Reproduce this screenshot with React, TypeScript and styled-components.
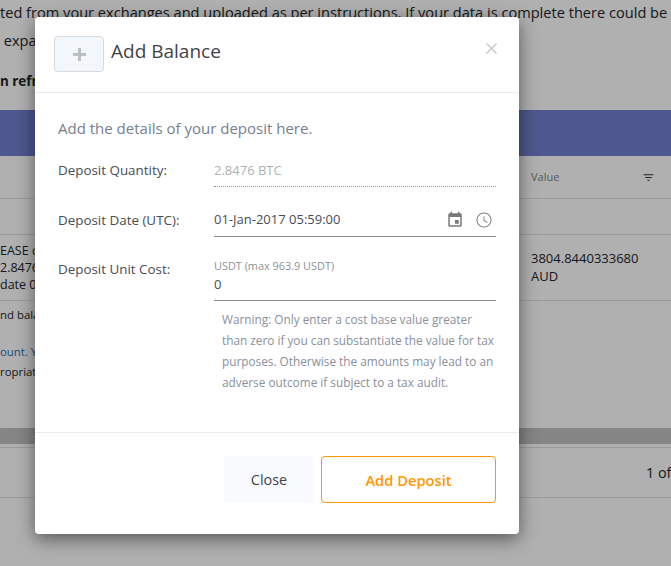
import React from "react";
import styled, { createGlobalStyle } from "styled-components";

const Global = createGlobalStyle`
  html, body {
    margin: 0;
    padding: 0;
    height: 100%;
    overflow: hidden;
    background: #fff;
  }
`;

const Page = styled.div`
  width: 671px;
  height: 566px;
  overflow: hidden;
  position: relative;
  font-family: "Open Sans", "Liberation Sans", sans-serif;
  color: #212529;
  white-space: nowrap;
`;

const Intro = styled.div`
  height: 110px;
  box-sizing: border-box;
  padding-top: 2px;
  font-size: 14.6px;
`;

const IntroLine = styled.div<{ $gap: number; $bold?: boolean }>`
  height: 20px;
  line-height: 20px;
  margin-bottom: ${(p) => p.$gap}px;
  font-weight: ${(p) => (p.$bold ? 700 : 400)};
  font-size: ${(p) => (p.$bold ? "13.4px" : "inherit")};
`;

const Band = styled.div`
  height: 46px;
  background: #717ecf;
`;

const TableRow = styled.div<{ $h: number }>`
  height: ${(p) => p.$h}px;
  box-sizing: border-box;
  border-bottom: 1px solid #dee2e6;
  display: grid;
  grid-template-columns: 531px 111px 29px;
  align-items: center;
  font-size: 13px;
  line-height: 18px;
`;

const HeadCell = styled.div`
  color: #7f8388;
  font-size: 11px;
`;

const FilterIcon = styled.svg`
  width: 13px;
  height: 13px;
  fill: #333;
  display: block;
`;

const LeftCell = styled.div`
  overflow: hidden;
  font-size: 12.5px;
  line-height: 17px;
`;

const RightCell = styled.div`
  padding-bottom: 2px;
`;

const Notes = styled.div`
  height: 127px;
  box-sizing: border-box;
  padding-top: 5px;
  font-size: 11.4px;
`;

const Note = styled.div<{ $top: number; $link?: boolean }>`
  line-height: 18px;
  margin-top: ${(p) => p.$top}px;
  color: ${(p) => (p.$link ? "#2a6fb5" : "#212529")};
`;

const ScrollBar = styled.div`
  height: 16px;
  background: #c1c1c1;
`;

const Pager = styled.div`
  height: 51px;
  margin-top: 3px;
  box-sizing: border-box;
  border-top: 1px solid #dee2e6;
  border-bottom: 1px solid #dee2e6;
  display: flex;
  align-items: center;
  padding-left: 646px;
  font-size: 14.4px;
`;

const Backdrop = styled.div`
  position: absolute;
  inset: 0;
  background: rgba(0, 0, 0, 0.31);
`;

const Modal = styled.div`
  position: absolute;
  left: 35px;
  top: 17px;
  width: 484px;
  height: 517px;
  background: #fff;
  border-radius: 4px;
  box-shadow: 0 5px 18px rgba(0, 0, 0, 0.5);
  display: flex;
  flex-direction: column;
  color: #3f4449;
`;

const Header = styled.div`
  height: 76px;
  flex: none;
  box-sizing: border-box;
  border-bottom: 1px solid #e9ecef;
  padding: 19px 22px 0 19px;
  display: flex;
  align-items: flex-start;
`;

const PlusBox = styled.div`
  width: 50px;
  height: 36px;
  box-sizing: border-box;
  border: 1px solid #d5dbe1;
  border-radius: 4px;
  background: #f3f7fb;
  display: flex;
  align-items: center;
  justify-content: center;
  margin-right: 7px;
`;

const Title = styled.div`
  font-size: 19px;
  line-height: 30px;
  color: #3f4449;
`;

const CloseX = styled.svg`
  width: 11px;
  height: 11px;
  margin-left: auto;
  margin-top: 7px;
  stroke: #c4c4c4;
  stroke-width: 1.3;
`;

const Body = styled.div`
  flex: 1;
  box-sizing: border-box;
  padding: 24px 23px 0;
`;

const Lead = styled.div`
  font-size: 15px;
  line-height: 22px;
  color: #78808f;
  margin-bottom: 19px;
`;

const FormRow = styled.div<{ $h: number }>`
  display: grid;
  grid-template-columns: 156px 282px;
  height: ${(p) => p.$h}px;
`;

const Label = styled.div<{ $top: number }>`
  font-size: 13.4px;
  line-height: 20px;
  padding-top: ${(p) => p.$top}px;
  color: #484d53;
`;

const Field = styled.div<{ $line: string }>`
  box-sizing: border-box;
  border-bottom: ${(p) => p.$line};
  display: flex;
  align-items: flex-start;
`;

const Value = styled.div<{ $muted?: boolean; $top?: number }>`
  font-size: 13px;
  line-height: 20px;
  padding-top: ${(p) => p.$top ?? 0}px;
  color: ${(p) => (p.$muted ? "#aeb1b5" : "#484d53")};
  flex: 1;
`;

const IconSlot = styled.svg`
  width: 18px;
  height: 18px;
  fill: #77797c;
  margin: 24px 0 0 11px;
  display: block;
  flex: none;
  &:last-child {
    margin-right: 3px;
  }
`;

const Stack = styled.div`
  display: flex;
  flex-direction: column;
  padding-top: 22px;
`;

const Hint = styled.div`
  font-size: 10.9px;
  line-height: 14px;
  color: #8d9196;
`;

const Warning = styled.div`
  margin: 8px 0 0 164px;
  width: 274px;
  font-size: 11.8px;
  line-height: 21px;
  color: #8a8f9c;
  white-space: normal;
`;

const Footer = styled.div`
  height: 102px;
  flex: none;
  box-sizing: border-box;
  border-top: 1px solid #e9ecef;
  padding: 23px 23px 0 0;
  display: flex;
  justify-content: flex-end;
  gap: 7px;
`;

const Button = styled.button<{ $primary?: boolean }>`
  height: 47px;
  width: ${(p) => (p.$primary ? 175 : 90)}px;
  box-sizing: border-box;
  border-radius: 4px;
  font-family: inherit;
  font-size: ${(p) => (p.$primary ? 14.7 : 14.4)}px;
  font-weight: ${(p) => (p.$primary ? 600 : 400)};
  color: ${(p) => (p.$primary ? "#ff9800" : "#3f4449")};
  background: ${(p) => (p.$primary ? "#fff" : "#f9fafd")};
  border: ${(p) => (p.$primary ? "1px solid #ff9800" : "none")};
`;

export default function App() {
  return (
    <Page>
      <Global />
      <Intro>
        <IntroLine $gap={8}>ted from your exchanges and uploaded as per instructions. If your data is complete there could be</IntroLine>
        <IntroLine $gap={21}>&nbsp;expand</IntroLine>
        <IntroLine $gap={0} $bold>n refresh</IntroLine>
      </Intro>
      <Band />
      <TableRow $h={43}>
        <div />
        <HeadCell>Value</HeadCell>
        <FilterIcon viewBox="0 0 24 24">
          <path d="M10 18h4v-2h-4v2zM3 6v2h18V6H3zm3 7h12v-2H6v2z" />
        </FilterIcon>
      </TableRow>
      <TableRow $h={36} />
      <TableRow $h={66}>
        <LeftCell>
          EASE c
          <br />
          2.8476
          <br />
          date 01
        </LeftCell>
        <RightCell>
          3804.8440333680
          <br />
          AUD
        </RightCell>
        <div />
      </TableRow>
      <Notes>
        <Note $top={0}>nd balance</Note>
        <Note $top={19} $link>ount. Y</Note>
        <Note $top={2}>ropriate</Note>
      </Notes>
      <ScrollBar />
      <Pager>1 of</Pager>

      <Backdrop />
      <Modal>
        <Header>
          <PlusBox>
            <svg width="13" height="13" viewBox="0 0 13 13" fill="#b8c0c9">
              <path d="M5 0h3v5h5v3H8v5H5V8H0V5h5z" />
            </svg>
          </PlusBox>
          <Title>Add Balance</Title>
          <CloseX viewBox="0 0 11 11">
            <path d="M0.5 0.5l10 10M10.5 0.5l-10 10" />
          </CloseX>
        </Header>
        <Body>
          <Lead>Add the details of your deposit here.</Lead>
          <FormRow $h={29}>
            <Label $top={2}>Deposit Quantity:</Label>
            <Field $line="1px dotted #9a9a9a">
              <Value $muted $top={2}>2.8476 BTC</Value>
            </Field>
          </FormRow>
          <FormRow $h={50}>
            <Label $top={23}>Deposit Date (UTC):</Label>
            <Field $line="1px solid #8f8f8f">
              <Value $top={22}>01-Jan-2017 05:59:00</Value>
              <IconSlot viewBox="0 0 24 24">
                <path d="M17 12h-5v5h5v-5zM16 1v2H8V1H6v2H5c-1.11 0-1.99.9-1.99 2L3 19c0 1.1.89 2 2 2h14c1.1 0 2-.9 2-2V5c0-1.1-.9-2-2-2h-1V1h-2zm3 18H5V8h14v11z" />
              </IconSlot>
              <IconSlot viewBox="0 0 24 24">
                <path d="M11.99 2C6.47 2 2 6.48 2 12s4.47 10 9.99 10C17.52 22 22 17.52 22 12S17.52 2 11.99 2zM12 20.7c-4.8 0-8.7-3.9-8.7-8.7S7.200 3.300 12 3.300s8.700 3.900 8.700 8.700-3.900 8.700-8.700 8.700zm.6-13.700h-1.200v6l4.800 2.900.6-1-4.200-2.500z" />
              </IconSlot>
            </Field>
          </FormRow>
          <FormRow $h={64}>
            <Label $top={22}>Deposit Unit Cost:</Label>
            <Field $line="1px solid #8f8f8f">
              <Stack>
                <Hint>USDT (max 963.9 USDT)</Hint>
                <Value $top={1}>0</Value>
              </Stack>
            </Field>
          </FormRow>
          <Warning>
            Warning: Only enter a cost base value greater than zero if you can substantiate the value for tax purposes.
            Otherwise the amounts may lead to an adverse outcome if subject to a tax audit.
          </Warning>
        </Body>
        <Footer>
          <Button>Close</Button>
          <Button $primary>Add Deposit</Button>
        </Footer>
      </Modal>
    </Page>
  );
}
